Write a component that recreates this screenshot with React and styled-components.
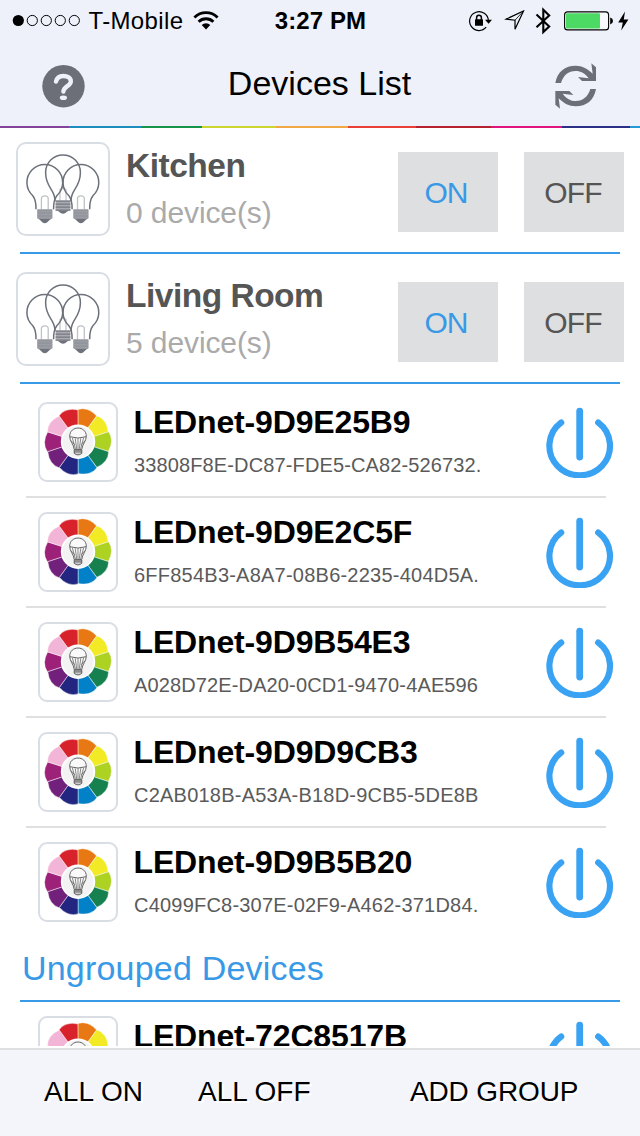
import React from 'react';
import styled, { createGlobalStyle } from 'styled-components';

const Global = createGlobalStyle`
  * { box-sizing: border-box; }
  body { margin: 0; background: #fff; }
`;

const Screen = styled.div`
  display: flex;
  flex-direction: column;
  width: 640px;
  height: 1136px;
  overflow: hidden;
  background: #fff;
  color: #000;
  font-family: 'Liberation Sans', Arial, sans-serif;
  white-space: nowrap;
  svg { display: block; flex: none; }
`;

const Header = styled.header`
  flex: none;
  height: 128px;
  background: #eef1fa;
`;

const StatusBar = styled.div`
  display: grid;
  grid-template-columns: 1fr auto 1fr;
  align-items: center;
  height: 40px;
  padding: 1px 11px 0 12px;
`;

const StatusSide = styled.div`
  display: flex;
  align-items: center;
  justify-content: ${(p) => (p.$end ? 'flex-end' : 'flex-start')};
`;

const Carrier = styled.span`
  margin: 0 10px 0 6.5px;
  font-size: 24px;
  line-height: 28px;
  letter-spacing: 0.35px;
`;

const Clock = styled.span`
  font-size: 24px;
  line-height: 28px;
  font-weight: bold;
  letter-spacing: 0.1px;
`;

const NavBar = styled.div`
  display: grid;
  grid-template-columns: 1fr auto 1fr;
  align-items: center;
  height: 86px;
  padding: 0 40px 0 42px;
`;

const IconButton = styled.button`
  justify-self: ${(p) => (p.$end ? 'end' : 'start')};
  margin: 6px 0 0;
  padding: 0;
  border: 0;
  background: none;
`;

const Title = styled.h1`
  margin: 0 3px 0 0;
  font-size: 34px;
  line-height: 40px;
  font-weight: normal;
`;

const Rainbow = styled.div`
  display: flex;
  height: 2px;
`;

const Band = styled.i`
  flex: ${(p) => p.$w} 0 0;
  background: ${(p) => p.$color};
`;

const List = styled.main`
  flex: 1;
  min-height: 0;
  overflow: hidden;
`;

const GroupRow = styled.section`
  display: flex;
  align-items: flex-end;
  height: ${(p) => (p.$first ? 126 : 130)}px;
  margin: 0 20px;
  padding-bottom: 16px;
  border-bottom: 2px solid #3899e6;
`;

const Tile = styled.div`
  flex: none;
  width: ${(p) => p.$size}px;
  height: ${(p) => p.$size}px;
  border: 2px solid #d9dde4;
  border-radius: ${(p) => (p.$size > 90 ? 10 : 9)}px;
  background: #fff;
`;

const GroupTile = styled(Tile)`
  margin-left: -4px;
`;

const GroupText = styled.div`
  flex: 1;
  height: 94px;
  padding: 4px 0 0 16px;
`;

const GroupName = styled.h2`
  margin: 0;
  font-size: 33.5px;
  line-height: 40px;
  font-weight: bold;
  letter-spacing: -0.5px;
  color: #555;
`;

const GroupCount = styled.p`
  margin: 7px 0 0;
  font-size: 30px;
  line-height: 40px;
  letter-spacing: -0.1px;
  color: #aaa;
`;

const Toggles = styled.div`
  display: flex;
  gap: 26px;
  margin: 0 -4px 4px 0;
`;

const Toggle = styled.button`
  width: 100px;
  height: 80px;
  padding: ${(p) => (p.$on ? '1px 4px 0 0' : '1px 2px 0 0')};
  border: 0;
  background: #dedfe1;
  color: ${(p) => (p.$on ? '#3899e6' : '#555')};
  font: 30px 'Liberation Sans', Arial, sans-serif;
  letter-spacing: -0.9px;
`;

const Devices = styled.div`
  padding-top: ${(p) => p.$top || 0}px;
`;

const DeviceRow = styled.article`
  display: flex;
  align-items: flex-start;
  height: 110px;
  margin: 0 26px;
  padding: 14px 0 0 12px;
`;

const DeviceItem = styled.div`
  &:not(:last-child)::after {
    content: '';
    display: block;
    height: 2px;
    margin: -2px 34px 0 26px;
    background: #e0e0e0;
  }
`;

const DeviceText = styled.div`
  flex: 1;
  padding-left: 15.5px;
`;

const DeviceName = styled.h3`
  margin: 0;
  font-size: 32px;
  line-height: 40px;
  font-weight: bold;
  letter-spacing: -0.15px;
`;

const DeviceId = styled.p`
  margin: 8px 0 0;
  padding-left: 0.5px;
  font-size: 20px;
  line-height: 30px;
  letter-spacing: ${(p) => p.$track}px;
  color: #5a5a5a;
`;

const PowerButton = styled.button`
  flex: none;
  margin-top: 5px;
  padding: 0;
  border: 0;
  background: none;
`;

const SectionTitle = styled.h2`
  height: 64px;
  margin: 0 20px;
  padding-left: 2px;
  border-bottom: 2px solid #3899e6;
  color: #3899e6;
  font-size: 34px;
  line-height: 60px;
  font-weight: normal;
  letter-spacing: 0.2px;
`;

const Footer = styled.footer`
  flex: none;
  display: grid;
  grid-template-columns: 154px 212px auto;
  align-items: center;
  height: 88px;
  margin-top: 2px;
  padding: 0 0 2px 44px;
  border-top: 2px solid #dee0e1;
  background: #f4f5fa;
`;

const Action = styled.button`
  padding: 0;
  border: 0;
  background: none;
  color: #000;
  font: 28px/40px 'Liberation Sans', Arial, sans-serif;
  letter-spacing: ${(p) => p.$track || 0}px;
  text-align: left;
  text-shadow: 2px 2px 0 #fff;
`;

const bands = [
  [69, '#86439b'], [72, '#1e8ebf'], [60.5, '#16944a'], [74.5, '#ccd62d'], [71.5, '#f0a944'],
  [68.5, '#e83f38'], [75, '#b7202f'], [71, '#e0147f'], [68, '#2c2f86'], [10, '#2599d6'],
];

const petals = ['#e87813', '#f2ea25', '#add222', '#16804f', '#0281c8', '#232680', '#71217b', '#9d2079', '#f2b5d8', '#d8222b'];

const SignalDots = () => (
  <svg width="70" height="14" viewBox="0 0 70 14">
    <circle cx="6.3" cy="6.5" r="5.6" />
    {[20.3, 34.3, 48.3, 62.3].map((x) => (
      <circle key={x} cx={x} cy="6.5" r="5.1" fill="none" stroke="#000" strokeWidth="1" />
    ))}
  </svg>
);

const Wifi = () => (
  <svg width="26" height="20" viewBox="0 0 26 20">
    <g fill="none" stroke="#000" strokeWidth="2.8">
      <path d="M1.4 6.4A16.4 16.4 0 0 1 24.6 6.4" />
      <path d="M5.6 10.8A10.5 10.5 0 0 1 20.4 10.8" />
    </g>
    <path d="M13 18.4L8.7 14A6.4 6.4 0 0 1 17.3 14Z" />
  </svg>
);

const RotationLock = () => (
  <svg width="25" height="22" viewBox="0 0 25 22">
    <path d="M18.2 17.2A9.4 9.4 0 1 1 20.4 10.6" fill="none" stroke="#000" strokeWidth="1.2" />
    <path d="M17 9.8H24L20.6 13.8Z" />
    <rect x="7" y="9.3" width="8" height="6.5" rx=".6" />
    <path d="M8.6 10V7.7a2.4 2.4 0 0 1 4.8 0V10" fill="none" stroke="#000" strokeWidth="1.5" />
  </svg>
);

const Location = () => (
  <svg width="21" height="21" viewBox="0 0 21 21">
    <path d="M19.5 1L11 19.3V10.2L2 9.2Z" fill="none" stroke="#000" strokeWidth="1.2" />
    <path d="M19.5 1L11 10.2" stroke="#000" strokeWidth=".8" />
  </svg>
);

const Bluetooth = () => (
  <svg width="17" height="28" viewBox="0 0 17 28">
    <path d="M1.5 7.5L14.2 19.5L8.3 25V2.8L14.2 8.4L1.5 20.3" fill="none" stroke="#000" strokeWidth="2.1" />
  </svg>
);

const Battery = () => (
  <svg width="49" height="20" viewBox="0 0 49 20">
    <rect x=".6" y=".9" width="44" height="18" rx="3" fill="#fff" fillOpacity=".6" stroke="#000" strokeWidth="1.1" />
    <rect x="2" y="2.3" width="34" height="15.2" rx="1.2" fill="#4cd964" />
    <path d="M46.2 6.6Q49 7.5 49 10T46.2 13.4Z" />
  </svg>
);

const Bolt = () => (
  <svg width="11" height="20" viewBox="0 0 11 20">
    <path d="M7 0.5L.2 11.4H4.8L3.2 19.6L10.4 8.4H5.8Z" />
  </svg>
);

const Help = () => (
  <svg width="43" height="43" viewBox="0 0 43 43">
    <circle cx="21.5" cy="21.2" r="21.2" fill="#6c6f78" />
    <path d="M14 16.6C15 12.4 17.5 11 21.3 11C25.7 11 28.8 13 28.8 16.4C28.8 21.2 21.4 21 21.4 26.6" fill="none" stroke="#eef1fa" strokeWidth="4.4" strokeLinecap="round" />
    <ellipse cx="21.4" cy="32.8" rx="3.6" ry="2.3" fill="#eef1fa" />
  </svg>
);

const arrow = 'M706 249C712 215 735 197 767 197C787 197 803 206 818 221L814 190L828 202V243H786L774 231L806 235C795 220 782 213 767 213C745 213 730 226 723 249Z';
const Refresh = () => (
  <svg width="48" height="48" viewBox="696 186 144 144" fill="#6c6f78">
    <path d={arrow} />
    <path d={arrow} transform="rotate(180 767 258)" />
  </svg>
);

const Lamp = ({ x, y }) => (
  <g transform={`translate(${x} ${y})`}>
    <path d="M-8.8 27C-8.6 20 -9.3 17 -12 13.4A17.9 17.9 0 1 1 12 13.4C9.3 17 8.6 20 8.8 27" fill="none" stroke="#6c717a" strokeWidth="1.5" />
    <path d="M-3.4 27V16.5Q-3.4 13.6 0 13.6T3.4 16.5V27" fill="none" stroke="#bfc1c6" strokeWidth="1.3" />
    <path d="M-7.6 27H7.6V36L6 37H-6L-7.6 36Z" fill="#94969d" />
    <path d="M-7.6 29.4H7.6M-7.6 32.2H7.6M-7.6 35H7.6" stroke="#a3a5ab" strokeWidth=".6" />
    <path d="M-5.8 36.8H5.8L2.2 40.3Q0 41.4 -2.2 40.3Z" fill="#6e727b" />
  </g>
);

const Lamps = () => (
  <svg width="90" height="90" viewBox="2 2 90 90">
    <g transform="translate(47 30.5)">
      <path d="M-8 28.4C-8 24 -9.4 20.5 -12 16.6C-15 12 -17.4 7 -17.4 0A17.4 17.6 0 0 1 17.4 0C17.4 7 15 12 12 16.6C9.4 20.5 8 24 8 28.4" fill="none" stroke="#6c717a" strokeWidth="1.5" />
      <path d="M-3 28V17Q0 14 3 17V28" fill="none" stroke="#bfc1c6" strokeWidth="1.2" />
      <path d="M-7.4 28H7.4V38H-7.4Z" fill="#a9abb1" />
      <path d="M-7.4 28.6H7.4M-7.4 31.6H7.4M-7.4 34.6H7.4M-7.4 37.6H7.4" stroke="#777a82" strokeWidth="1.2" />
      <path d="M-5.6 38H5.6L2 40.8Q0 41.6 -2 40.8Z" fill="#6e727b" />
    </g>
    <Lamp x={28.8} y={40.3} />
    <Lamp x={64.9} y={40.3} />
  </svg>
);

const ColorWheel = () => (
  <svg width="76" height="76" viewBox="2 2 76 76">
    <g transform="translate(40 39.7)">
      {petals.map((color, i) => (
        <path key={color} d="M0 -15V-32.2Q10 -35.2 18.6 -25.8L8.8 -12.1Z" fill={color} stroke="#fff" strokeWidth=".4" transform={`rotate(${i * 36})`} />
      ))}
      <circle r="17.2" fill="#fff" />
      <circle r="15.5" fill="#f3f3f3" />
      <g fill="none" stroke="#555" strokeWidth=".9">
        <path d="M-8.3 -5.4C-8.3 -16.4 8.3 -16.4 8.3 -5.4C8.3 -.5 4.3 2.4 3.7 8H-3.7C-4.3 2.4 -8.3 -.5 -8.3 -5.4Z" fill="#fafafa" />
        <path d="M-8.2 -5Q0 -2.3 8.2 -5" />
        <path d="M-5.6 -3.8L-2.5 7.6M-2.8 -3.4L-1.2 7.6M0 -3.4V7.6M2.8 -3.4L1.2 7.6M5.6 -3.8L2.5 7.6M-7 -1L-3.2 3M7 -1L3.2 3" strokeWidth=".7" />
        <path d="M-3.8 8.4H3.8V11.6Q0 14.8 -3.8 11.6ZM-3.8 10.2H3.8" fill="#ccc" />
      </g>
    </g>
  </svg>
);

const Power = () => (
  <svg width="68" height="71" viewBox="0 0 68 71" fill="none" stroke="#3aa2f2" strokeLinecap="round">
    <path d="M15.2 15.6A30.3 29.4 0 1 0 52.2 15.6" strokeWidth="6.2" />
    <path d="M33.7 4.2V50" strokeWidth="6.8" />
  </svg>
);

const groups = [
  { name: 'Kitchen', count: 0 },
  { name: 'Living Room', count: 5 },
];

const grouped = [
  ['LEDnet-9D9E25B9', '33808F8E-DC87-FDE5-CA82-526732.', 0.13],
  ['LEDnet-9D9E2C5F', '6FF854B3-A8A7-08B6-2235-404D5A.', 0.23],
  ['LEDnet-9D9B54E3', 'A028D72E-DA20-0CD1-9470-4AE596', 0.13],
  ['LEDnet-9D9D9CB3', 'C2AB018B-A53A-B18D-9CB5-5DE8B', 0.23],
  ['LEDnet-9D9B5B20', 'C4099FC8-307E-02F9-A462-371D84.', 0.21],
];

const ungrouped = [['LEDnet-72C8517B', '', 0]];

const Device = ({ name, id, track }) => (
  <DeviceItem>
    <DeviceRow>
      <Tile $size={80}><ColorWheel /></Tile>
      <DeviceText>
        <DeviceName>{name}</DeviceName>
        <DeviceId $track={track}>{id}</DeviceId>
      </DeviceText>
      <PowerButton aria-label="Power"><Power /></PowerButton>
    </DeviceRow>
  </DeviceItem>
);

const Gap = styled.span`
  width: ${(p) => p.$w}px;
`;

export default function App() {
  return (
    <Screen>
      <Global />
      <Header>
        <StatusBar>
          <StatusSide>
            <SignalDots />
            <Carrier>T-Mobile</Carrier>
            <Wifi />
          </StatusSide>
          <Clock>3:27 PM</Clock>
          <StatusSide $end>
            <RotationLock />
            <Gap $w={11} />
            <Location />
            <Gap $w={10} />
            <Bluetooth />
            <Gap $w={12} />
            <Battery />
            <Gap $w={5} />
            <Bolt />
          </StatusSide>
        </StatusBar>
        <NavBar>
          <IconButton aria-label="Help"><Help /></IconButton>
          <Title>Devices List</Title>
          <IconButton $end aria-label="Refresh"><Refresh /></IconButton>
        </NavBar>
        <Rainbow>
          {bands.map(([w, color]) => <Band key={color} $w={w} $color={color} />)}
        </Rainbow>
      </Header>
      <List>
        {groups.map((g, i) => (
          <GroupRow key={g.name} $first={i === 0}>
            <GroupTile $size={94}><Lamps /></GroupTile>
            <GroupText>
              <GroupName>{g.name}</GroupName>
              <GroupCount>{g.count} device(s)</GroupCount>
            </GroupText>
            <Toggles>
              <Toggle $on>ON</Toggle>
              <Toggle>OFF</Toggle>
            </Toggles>
          </GroupRow>
        ))}
        <Devices $top={4}>
          {grouped.map(([name, id, track]) => <Device key={name} name={name} id={id} track={track} />)}
        </Devices>
        <SectionTitle>Ungrouped Devices</SectionTitle>
        <Devices>
          {ungrouped.map(([name, id, track]) => <Device key={name} name={name} id={id} track={track} />)}
        </Devices>
      </List>
      <Footer>
        <Action $track={0.1}>ALL ON</Action>
        <Action>ALL OFF</Action>
        <Action $track={-0.15}>ADD GROUP</Action>
      </Footer>
    </Screen>
  );
}
